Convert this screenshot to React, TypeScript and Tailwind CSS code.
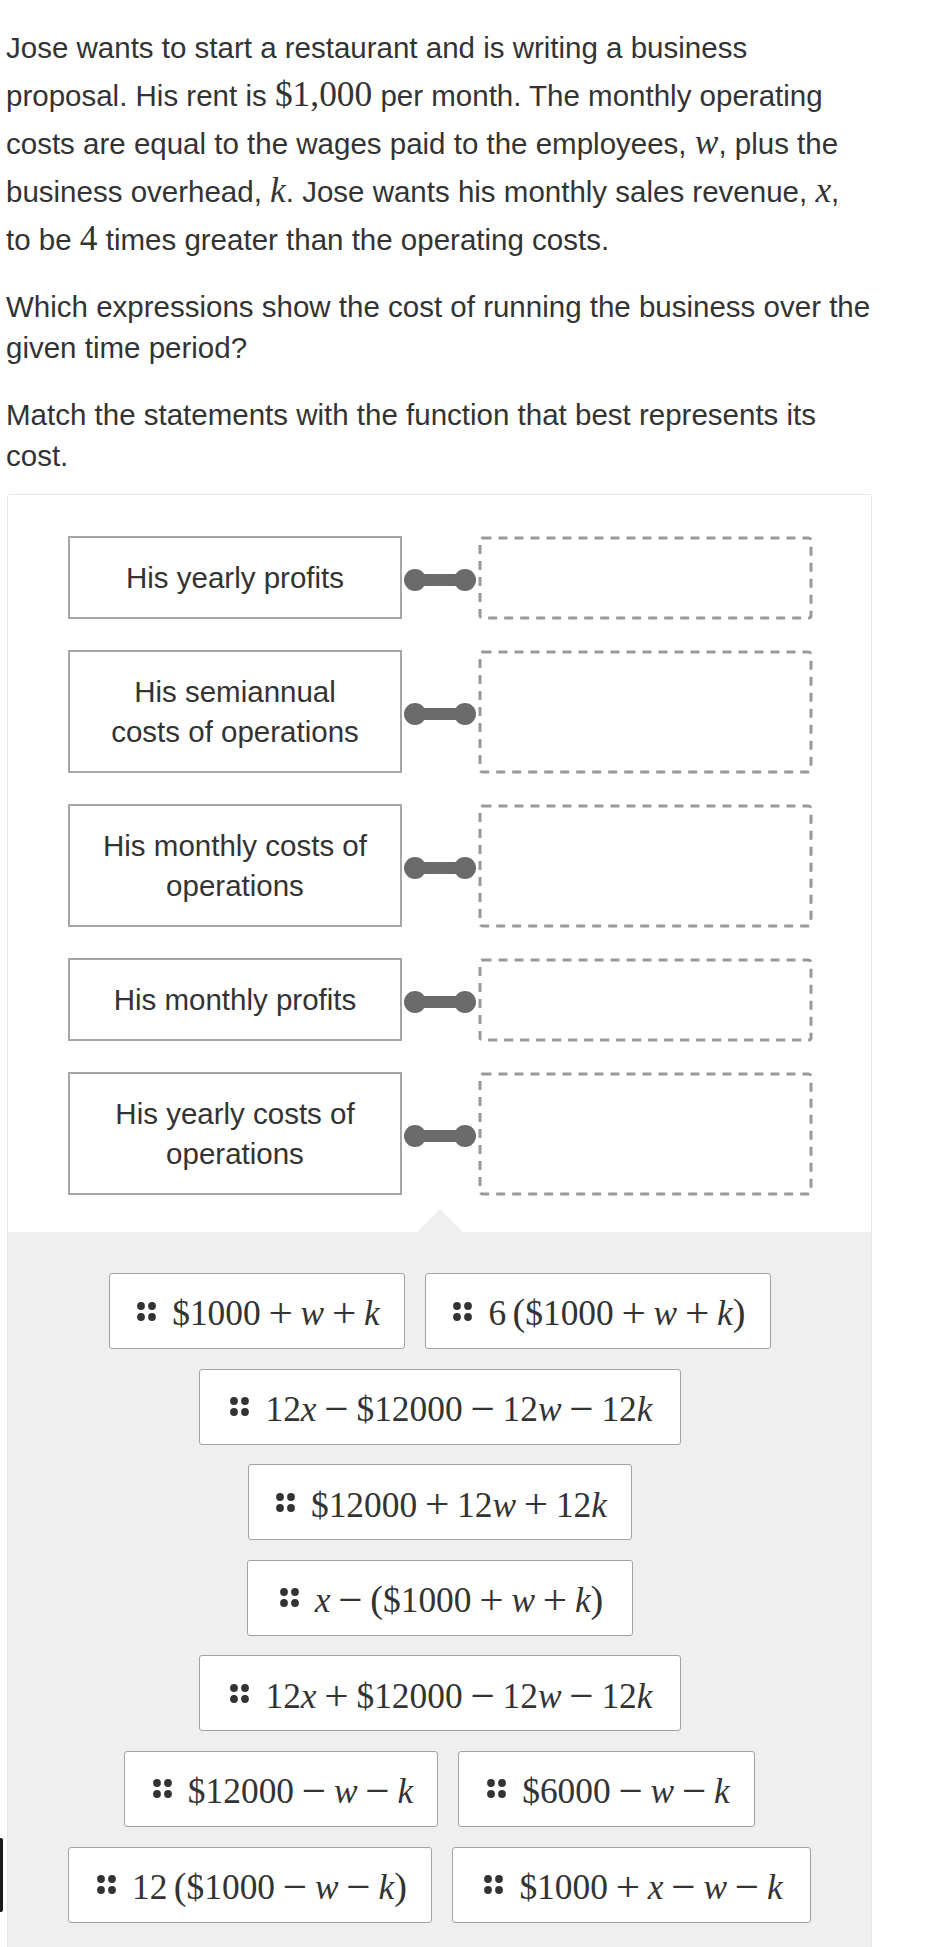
import type { ReactNode } from 'react';

const sans = "font-['Liberation_Sans',Arial,Helvetica,sans-serif]";
const serif = "font-['Liberation_Serif','Times_New_Roman',serif]";

function renderMath(expr: string) {
  const out: ReactNode[] = [];
  let buf = '';
  const flush = () => {
    if (buf) {
      out.push(<span key={out.length}>{buf}</span>);
      buf = '';
    }
  };
  for (let i = 0; i < expr.length; i++) {
    const c = expr[i];
    if ('xwk'.includes(c)) {
      flush();
      out.push(
        <span key={out.length} className="italic">
          {c}
        </span>
      );
    } else if (c === '+' || c === '−') {
      flush();
      out.push(
        <span key={out.length} className="relative top-[0.04em] mx-[0.18em] text-[1.22em]">
          {c}
        </span>
      );
    } else if (c === '(' || c === ')') {
      flush();
      const spaced = c === '(' && i > 0 && /\d/.test(expr[i - 1]);
      out.push(
        <span key={out.length} className={spaced ? 'ml-[0.167em] text-[1.08em]' : 'text-[1.08em]'}>
          {c}
        </span>
      );
    } else {
      buf += c;
    }
  }
  flush();
  return out;
}

function M({ children }: { children: string }) {
  return <span className={`${serif} text-[35.4px] leading-none`}>{renderMath(children)}</span>;
}

function Connector() {
  return (
    <div className="mt-1 flex w-[76px] shrink-0 items-center">
      <svg width="76" height="24" viewBox="0 0 76 24">
        <rect x="13" y="6" width="50" height="12" fill="#6b6b6b" />
        <circle cx="13" cy="12" r="11" fill="#6b6b6b" />
        <circle cx="63" cy="12" r="11" fill="#6b6b6b" />
      </svg>
    </div>
  );
}

function DropZone() {
  return (
    <div className="relative w-[334px] shrink-0">
      <div className="absolute inset-[1.5px]">
        <svg width="100%" height="100%" className="overflow-visible">
          <rect
            x="0"
            y="0"
            width="100%"
            height="100%"
            rx="2.5"
            fill="none"
            stroke="#999"
            strokeWidth="3"
            strokeDasharray="9 7"
          />
        </svg>
      </div>
    </div>
  );
}

function Handle() {
  return (
    <svg width="19" height="19" viewBox="0 0 19 19" className="shrink-0">
      <circle cx="4" cy="4" r="3.9" fill="#333" />
      <circle cx="15" cy="4" r="3.9" fill="#333" />
      <circle cx="4" cy="15" r="3.9" fill="#333" />
      <circle cx="15" cy="15" r="3.9" fill="#333" />
    </svg>
  );
}

const statements = [
  ['His yearly profits'],
  ['His semiannual', 'costs of operations'],
  ['His monthly costs of', 'operations'],
  ['His monthly profits'],
  ['His yearly costs of', 'operations'],
];

const tiles = [
  { expr: '$1000+w+k', w: 'w-[296px]' },
  { expr: '6($1000+w+k)', w: 'w-[346px]' },
  { expr: '12x−$12000−12w−12k', w: 'w-[482px]' },
  { expr: '$12000+12w+12k', w: 'w-[384px]' },
  { expr: 'x−($1000+w+k)', w: 'w-[386px]' },
  { expr: '12x+$12000−12w−12k', w: 'w-[482px]' },
  { expr: '$12000−w−k', w: 'w-[314px]' },
  { expr: '$6000−w−k', w: 'w-[297px]' },
  { expr: '12($1000−w−k)', w: 'w-[364px]' },
  { expr: '$1000+x−w−k', w: 'w-[359px]' },
];

export default function App() {
  return (
    <div className={`relative min-h-[1947px] bg-white pl-[6px] pt-[24px] text-[#333] ${sans}`}>
      <p className="mb-[22px] whitespace-nowrap text-[29.5px] leading-[48px]">
        Jose wants to start a restaurant and is writing a business
        <br />
        proposal. His rent is <M>$1,000</M> per month. The monthly operating
        <br />
        costs are equal to the wages paid to the employees, <M>w</M>, plus the
        <br />
        business overhead, <M>k</M>. Jose wants his monthly sales revenue, <M>x</M>,
        <br />
        to be <M>4</M> times greater than the operating costs.
      </p>
      <p className="mb-[26px] whitespace-nowrap text-[29.5px] leading-[41px]">
        Which expressions show the cost of running the business over the
        <br />
        given time period?
      </p>
      <p className="whitespace-nowrap text-[29.5px] leading-[41px]">
        Match the statements with the function that best represents its
        <br />
        cost.
      </p>

      <div className="ml-px mt-[18px] w-[865px] rounded-t-[3px] border border-[#e6e6e6]">
        <div className="flex flex-col gap-[31px] bg-white px-[60px] pb-[37px] pt-[41px]">
          {statements.map((lines, i) => (
            <div key={i} className="flex items-stretch">
              <div className="flex w-[334px] shrink-0 flex-col items-center justify-center border-2 border-[#a6a6a6] py-[19.5px] text-center text-[29.5px] leading-[40px]">
                {lines.map((l) => (
                  <span key={l}>{l}</span>
                ))}
              </div>
              <Connector />
              <DropZone />
            </div>
          ))}
        </div>

        <div className="relative bg-[#efefef] px-[55px] pb-[40px] pt-[41px]">
          <div className="absolute left-1/2 top-[-23px] h-0 w-0 -translate-x-1/2 border-b-[23px] border-l-[23.5px] border-r-[23.5px] border-b-[#efefef] border-l-transparent border-r-transparent" />
          <div className="flex flex-wrap justify-center gap-x-5 gap-y-[19.6px]">
            {tiles.map((t) => (
              <div
                key={t.expr}
                className={`${t.w} flex h-[76px] items-center justify-center gap-[16px] rounded-[3px] border border-[#a3a3a3] bg-white pl-[4px] text-[#333]`}
              >
                <Handle />
                <M>{t.expr}</M>
              </div>
            ))}
          </div>
        </div>
      </div>

      <div className="absolute left-0 top-[1838px] h-[74px] w-[3px] rounded-r-[2px] bg-[#1c1c1c]" />
    </div>
  );
}
